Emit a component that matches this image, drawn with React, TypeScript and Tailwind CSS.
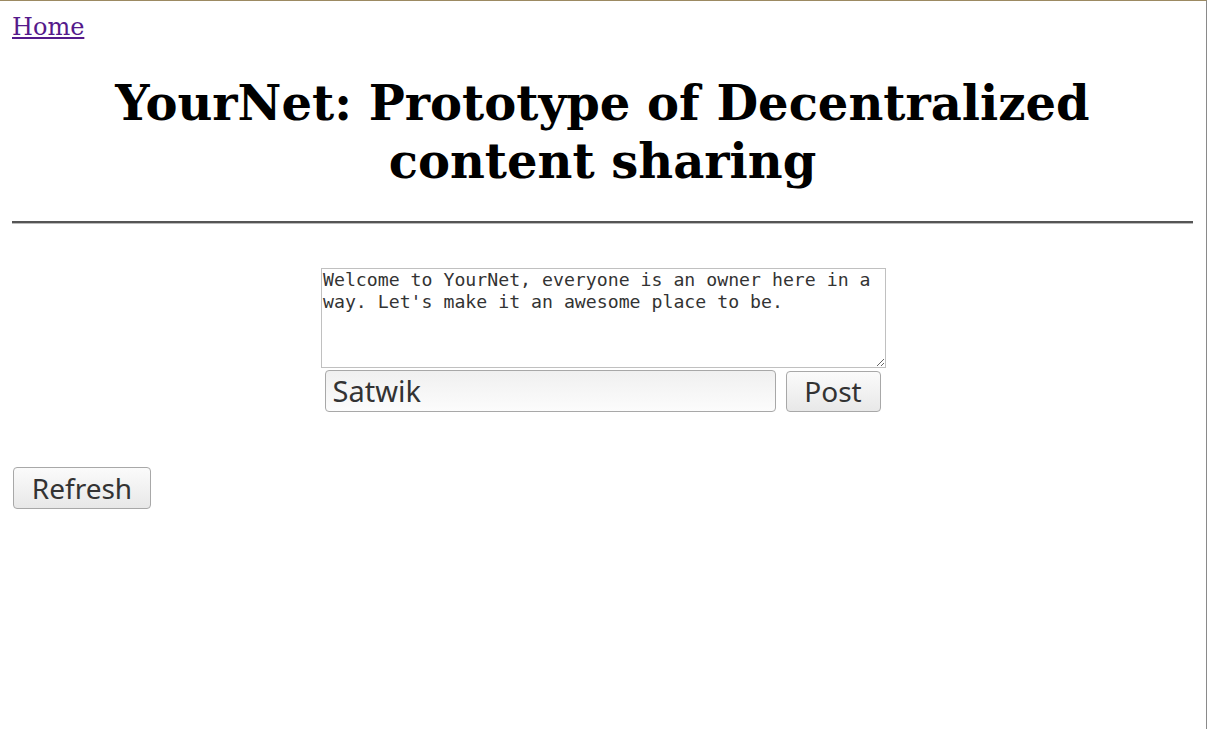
import React from "react";

const App = () => {
  return (
    <div className="min-h-[729px] bg-white border-t border-[#9c8a62] border-r border-r-[#8a8a8a] pl-3 pr-[13px] pt-[12px] font-['DejaVu_Serif',serif] text-black">
      {/* Nav */}
      <a href="#" className="text-[24px] leading-[28px] text-[#551a8b] underline">
        Home
      </a>

      {/* Title */}
      <h1 className="mt-[32px] text-center font-bold text-[48px] leading-[58px]">
        YourNet: Prototype of Decentralized
        <br />
        content sharing
      </h1>

      <hr className="mt-[31px] border-t-2 border-t-[#555] border-b border-b-[#bbb]" />

      {/* Composer */}
      <div className="mt-[44px] flex flex-col items-center">
        <textarea
          className="ml-[2px] w-[565px] h-[100px] border border-[#c0c0c0] px-[1px] py-0 text-[18.2px] leading-[22px] text-[#333] font-['DejaVu_Sans_Mono',monospace] resize-y"
          defaultValue="Welcome to YourNet, everyone is an owner here in a way. Let's make it an awesome place to be."
        />
        <div className="mt-[2px] flex items-center gap-[10px]">
          <input
            className="w-[451px] h-[42px] rounded-[4px] border border-[#a8a8a8] bg-gradient-to-b from-[#f0f0f0] to-[#fcfcfc] px-[7px] text-[29px] text-[#333] font-['Noto_Sans',sans-serif]"
            defaultValue="Satwik"
          />
          <button className="w-[95px] h-[41px] rounded-[4px] border border-[#a8a8a8] bg-gradient-to-b from-[#fbfbfb] to-[#e8e8e8] text-[28px] leading-none text-[#333] font-['Noto_Sans',sans-serif]">
            Post
          </button>
        </div>
      </div>

      {/* Feed actions */}
      <div className="mt-[55px]">
        <button className="ml-[1px] w-[138px] h-[42px] rounded-[4px] border border-[#a8a8a8] bg-gradient-to-b from-[#fbfbfb] to-[#e8e8e8] text-[28px] leading-none text-[#333] font-['Noto_Sans',sans-serif]">
          Refresh
        </button>
      </div>
    </div>
  );
};

export default App;
